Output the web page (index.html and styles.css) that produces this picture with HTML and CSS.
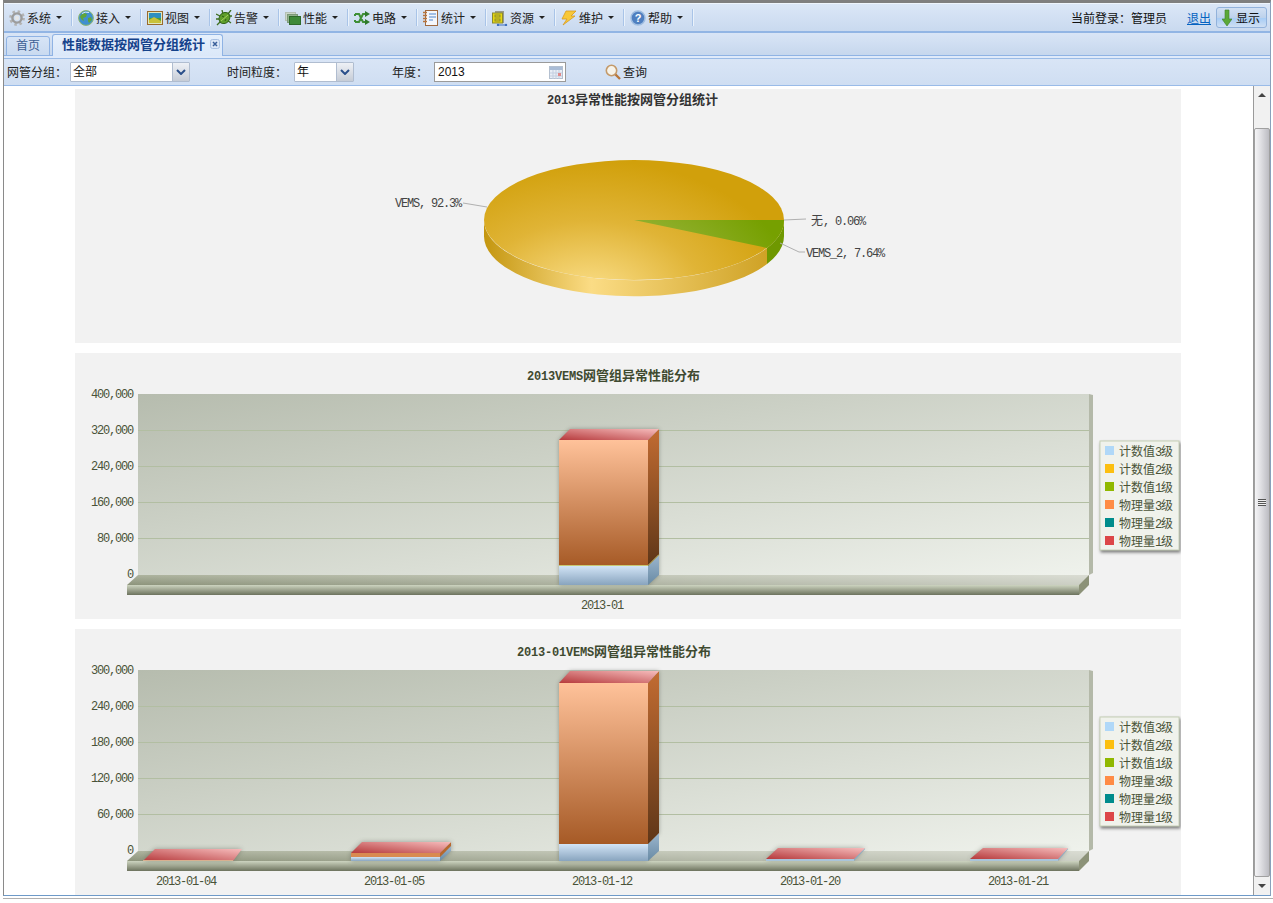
FILE: index.html
```html
<!DOCTYPE html>
<html lang="zh">
<head>
<meta charset="utf-8">
<title>性能数据按网管分组统计</title>
<link rel="stylesheet" href="styles.css">
</head>
<body>
<div class="frame">
  <div class="toolbar">
    <div class="items">
      <div class="item"><svg class="ico" viewBox="0 0 16 16"><circle cx="8" cy="8" r="6.400" fill="none" stroke="#b4b4b4" stroke-width="3" stroke-dasharray="2.400 2.600"/><circle cx="8" cy="8" r="4.600" fill="none" stroke="#9c9c9c" stroke-width="2.400"/><circle cx="8" cy="8" r="2.200" fill="#e6e6e6"/></svg><span>系统</span><i class="caret"></i></div>
      <div class="item"><svg class="ico" viewBox="0 0 16 16"><circle cx="8" cy="8" r="7.400" fill="#3f8fd0" stroke="#8fb86a"/><path d="M3 5l3-2 3 1-1 3-3 1 1 3-2-1-2-3zM10 8l3-1 1 3-3 3-1-2z" fill="#5fa53a"/><path d="M4 3.500a6 4 0 0 1 7-1" stroke="#d8ecfa" fill="none"/></svg><span>接入</span><i class="caret"></i></div>
      <div class="item"><svg class="ico" viewBox="0 0 16 16"><rect x=".5" y="1.500" width="15" height="13" fill="#dfe8c0" stroke="#9a6a2c"/><rect x="2" y="3" width="12" height="5" fill="#2f8fc0"/><rect x="2" y="8" width="12" height="5" fill="#4f9e3a"/><path d="M2 10l5-3 7 4v2H2z" fill="#c9c23a"/></svg><span>视图</span><i class="caret"></i></div>
      <div class="item"><svg class="ico" viewBox="0 0 16 16"><path d="M0 4l4 2M0 9h3M1 15l4-4M15 0l-3 4M16 6h-3M15 13l-4-3M6 0l1 4" stroke="#3f6f1f" stroke-width="1.300"/><ellipse cx="8.500" cy="8" rx="5" ry="6" transform="rotate(40 8.500 8)" fill="#5f9e2a" stroke="#33641a"/><path d="M5 11l7-6" stroke="#a8d060"/><path d="M6 6l2 1M9 11l1-2" stroke="#2d5a14"/></svg><span>告警</span><i class="caret"></i></div>
      <div class="item"><svg class="ico" viewBox="0 0 16 16"><rect x=".5" y="2.500" width="10" height="8" fill="#ccd6c8" stroke="#b4c0b4"/><rect x="2.500" y="4.500" width="10" height="8" fill="#93b28e" stroke="#7d9a7a"/><rect x="4.500" y="6.500" width="11" height="8" fill="#3f8a3a" stroke="#2f6a2c"/></svg><span>性能</span><i class="caret"></i></div>
      <div class="item"><svg class="ico" viewBox="0 0 16 16"><path d="M1 4h4l4 8h3M1 12h4l4-8h3M1 4v2M1 12v-2" fill="none" stroke="#3f8f36" stroke-width="2"/><path d="M11 1l5 3-5 3zM11 9l5 3-5 3z" fill="#2f7a2c"/></svg><span>电路</span><i class="caret"></i></div>
      <div class="item"><svg class="ico" viewBox="0 0 16 16"><rect x="2.500" y=".5" width="12" height="15" fill="#f4f6fb" stroke="#a06a40"/><path d="M0 2.500h4M0 5.500h4M0 8.500h4M0 11.500h4" stroke="#b8743c" stroke-width="1.500"/><path d="M6 4h7M6 7h7M6 10h4" stroke="#4f86d0" stroke-width="1.200"/></svg><span>统计</span><i class="caret"></i></div>
      <div class="item"><svg class="ico" viewBox="0 0 16 16"><rect x="3" y="1" width="9" height="12" fill="#9a9a8a"/><rect x=".5" y="3" width="10" height="10" fill="#e8d810" stroke="#8a8a30"/><rect x="3" y="5" width="5" height="2" fill="none" stroke="#8a8a30"/><rect x="3" y="9" width="5" height="2" fill="none" stroke="#8a8a30"/><path d="M5 15h10" stroke="#3f70c0"/><circle cx="6" cy="15" r="1.200" fill="#3f70c0"/><circle cx="14" cy="15" r="1.200" fill="#3f70c0"/></svg><span>资源</span><i class="caret"></i></div>
      <div class="item"><svg class="ico" viewBox="0 0 16 16"><path d="M5 1h10L10 6h4L2 15l4-6H1z" fill="#f8c838" stroke="#d89a20" stroke-width=".8"/></svg><span>维护</span><i class="caret"></i></div>
      <div class="item"><svg class="ico" viewBox="0 0 16 16"><circle cx="8" cy="8" r="7" fill="#4f7fc0" stroke="#9fbde0" stroke-width="1.500"/><text class="ico-q" x="8" y="12">?</text></svg><span>帮助</span><i class="caret"></i></div>
    </div>
    <div class="user">
      <span class="login">当前登录：管理员</span>
      <a class="logout" href="#">退出</a>
      <div class="show"><svg class="show-ico" viewBox="0 0 10 18"><path d="M3 1h4v9h3l-5 7-5-7h3z" fill="#5aa838" stroke="#3f7f28" stroke-width=".6"/></svg><span>显示</span></div>
    </div>
  </div>

  <div class="tabbar">
    <div class="tab">首页</div>
    <div class="tab tab-on">性能数据按网管分组统计<svg class="tab-x" viewBox="0 0 10 10"><rect x=".5" y=".5" width="9" height="9" rx="2" fill="#dbe6f6" stroke="#a9c1e3"/><path d="M3 3l4 4M7 3l-4 4" stroke="#3a5f9a" stroke-width="1.500"/></svg></div>
  </div>
  <div class="strip"></div>

  <div class="filter">
    <span class="lab lab-a">网管分组：</span>
    <div class="combo combo-a"><span class="val">全部</span><b class="drop"><svg viewBox="0 0 10 6"><path d="M1 1l4 4 4-4" fill="none" stroke="#2a4f8a" stroke-width="2"/></svg></b></div>
    <span class="lab lab-b">时间粒度：</span>
    <div class="combo combo-b"><span class="val">年</span><b class="drop"><svg viewBox="0 0 10 6"><path d="M1 1l4 4 4-4" fill="none" stroke="#2a4f8a" stroke-width="2"/></svg></b></div>
    <span class="lab lab-c">年度：</span>
    <div class="date"><span>2013</span><svg class="cal" viewBox="0 0 14 13"><rect x=".5" y=".5" width="13" height="12" fill="#e8eef6" stroke="#b4c0d0"/><rect x="1" y="1" width="12" height="3" fill="#a9bcd6"/><path d="M1 7h12M1 10h12M4 4v9M7 4v9M10 4v9" stroke="#c4cfe0"/><rect x="9" y="7" width="3" height="3" fill="#e08a8a"/></svg></div>
    <div class="query"><svg class="ico" viewBox="0 0 16 16"><circle cx="6.500" cy="6.500" r="5.200" fill="#f6f3ea" stroke="#c49a6a" stroke-width="1.600"/><path d="M10.500 10.500l4.500 4.500" stroke="#b8763a" stroke-width="2.400"/></svg><span>查询</span></div>
  </div>

  <div class="content">
    <div class="main">
      <div class="panel panel-a">
        <svg class="chart" width="1106" height="254" viewBox="75 89 1106 254">
          <defs>
            <radialGradient id="pieTop" gradientUnits="userSpaceOnUse" cx="0" cy="0" r="1" gradientTransform="translate(590 295) scale(205 135)"><stop offset="0" stop-color="#fce08c"/><stop offset=".55" stop-color="#e0b436"/><stop offset="1" stop-color="#d1a00b"/></radialGradient>
            <radialGradient id="pieGreen" gradientUnits="userSpaceOnUse" cx="0" cy="0" r="1" gradientTransform="translate(590 295) scale(205 135)"><stop offset=".55" stop-color="#92b030"/><stop offset="1" stop-color="#76a000"/></radialGradient>
            <linearGradient id="pieSide" gradientUnits="userSpaceOnUse" x1="484" y1="0" x2="767" y2="0"><stop offset="0" stop-color="#c4960f"/><stop offset=".38" stop-color="#fbdc85"/><stop offset="1" stop-color="#cfa225"/></linearGradient>
            <linearGradient id="wall" x1="0" y1="0" x2="1" y2="1"><stop offset="0" stop-color="#b6bcae"/><stop offset="1" stop-color="#eff2ec"/></linearGradient>
            <linearGradient id="floorTop" x1="0" y1="0" x2="0" y2="1"><stop offset="0" stop-color="#adb39e"/><stop offset="1" stop-color="#8d947c"/></linearGradient>
            <linearGradient id="floorFade" x1="0" y1="0" x2="1" y2="0"><stop offset="0" stop-color="#fff" stop-opacity="0"/><stop offset="1" stop-color="#fff" stop-opacity=".55"/></linearGradient>
            <linearGradient id="floorFront" x1="0" y1="0" x2="0" y2="1"><stop offset="0" stop-color="#cdd4c0"/><stop offset="1" stop-color="#6d735e"/></linearGradient>
            <linearGradient id="orFront" x1="0" y1="0" x2="0" y2="1"><stop offset="0" stop-color="#ffc29a"/><stop offset="1" stop-color="#a65a26"/></linearGradient>
            <linearGradient id="orSide" x1="0" y1="0" x2="0" y2="1"><stop offset="0" stop-color="#c26c32"/><stop offset="1" stop-color="#5e3618"/></linearGradient>
            <linearGradient id="blFront" x1="0" y1="0" x2="0" y2="1"><stop offset="0" stop-color="#d2e4f6"/><stop offset="1" stop-color="#88a4be"/></linearGradient>
            <linearGradient id="blSide" x1="0" y1="0" x2="0" y2="1"><stop offset="0" stop-color="#9cb6ce"/><stop offset="1" stop-color="#688aa4"/></linearGradient>
            <linearGradient id="redTop" x1="0" y1="1" x2="1" y2="0"><stop offset="0" stop-color="#b63a3c"/><stop offset="1" stop-color="#f6bcbc"/></linearGradient>
            <filter id="soft" x="-20%" y="-40%" width="140%" height="180%"><feGaussianBlur stdDeviation="2.500"/></filter>
            <filter id="softBig" x="-20%" y="-20%" width="140%" height="140%"><feGaussianBlur stdDeviation="2"/></filter>
          </defs>
          <text class="t-title t-plain" x="547" y="104"><tspan class="num-b">2013</tspan>异常性能按网管分组统计</text>
          <path d="M484 220v16a150 60 0 0 0 283 28v-16a150 60 0 0 1-283-28z" fill="url(#pieSide)"/>
          <path d="M767 248v16a150 60 0 0 0 17-28v-16a150 60 0 0 1-17 28z" fill="#6f9800"/>
          <ellipse cx="634" cy="220" rx="150" ry="60" fill="url(#pieTop)"/>
          <path d="M634 220h150a150 60 0 0 1-17 28z" fill="url(#pieGreen)"/>
          <path class="lead" d="M463 203l24 4M784 220l22-1M780 243l19 9h6"/>
          <text class="t-pie" x="395" y="207">VEMS, 92.3%</text>
          <text class="t-pie-cjk" x="811" y="225">无<tspan class="t-pie">, 0.06%</tspan></text>
          <text class="t-pie" x="806" y="257">VEMS_2, 7.64%</text>
        </svg>
      </div>

      <div class="panel panel-b">
        <svg class="chart" width="1106" height="266" viewBox="75 353 1106 266">
          <text class="t-title" x="527" y="380"><tspan class="num-b">2013VEMS</tspan>网管组异常性能分布</text>
          <path d="M1089 394l4 1v178l-4 2z" fill="#b4b9a9"/>
          <rect x="138" y="394" width="951" height="181" fill="url(#wall)"/>
          <path class="grid" d="M138 430.500h951M138 466.500h951M138 502.500h951M138 538.500h951"/>
          <path d="M138 575h951l-10 10H127z" fill="url(#floorTop)"/>
          <path d="M138 575h951l-10 10H127z" fill="url(#floorFade)"/>
          <rect x="127" y="585" width="952" height="10" fill="url(#floorFront)"/>
          <path d="M1079 585l10-10v10l-10 10z" fill="#8c9278"/>
          <text class="t-axis" x="133" y="398">400,000</text>
          <text class="t-axis" x="133" y="434">320,000</text>
          <text class="t-axis" x="133" y="470">240,000</text>
          <text class="t-axis" x="133" y="506">160,000</text>
          <text class="t-axis" x="133" y="542">80,000</text>
          <text class="t-axis" x="133" y="578">0</text>
          <path d="M559 440l11-11h89v146l-11 10H559z" fill="#4a4f45" opacity=".45" filter="url(#softBig)"/>
          <rect x="559" y="566" width="89" height="19" fill="url(#blFront)"/>
          <path d="M648 566l11-11v20l-11 10z" fill="url(#blSide)"/>
          <rect x="559" y="440" width="89" height="126" fill="url(#orFront)"/>
          <path d="M648 440l11-11v126l-11 11z" fill="url(#orSide)"/>
          <path class="edge" d="M559 565.500h89l11-11"/>
          <path d="M559 440l11-11h89l-11 11z" fill="url(#redTop)"/>
          <text class="t-x" x="602" y="609">2013-01</text>
          <g class="legend">
            <rect class="lg-box" x="1100" y="441" width="79" height="109"/>
            <rect x="1105" y="446" width="9" height="9" fill="#b0d8f8"/><text class="t-leg" x="1119" y="456">计数值<tspan class="num">3</tspan>级</text>
            <rect x="1105" y="464" width="9" height="9" fill="#fcbf10"/><text class="t-leg" x="1119" y="474">计数值<tspan class="num">2</tspan>级</text>
            <rect x="1105" y="482" width="9" height="9" fill="#90b800"/><text class="t-leg" x="1119" y="492">计数值<tspan class="num">1</tspan>级</text>
            <rect x="1105" y="500" width="9" height="9" fill="#ff8c45"/><text class="t-leg" x="1119" y="510">物理量<tspan class="num">3</tspan>级</text>
            <rect x="1105" y="518" width="9" height="9" fill="#008c8c"/><text class="t-leg" x="1119" y="528">物理量<tspan class="num">2</tspan>级</text>
            <rect x="1105" y="536" width="9" height="9" fill="#dc4648"/><text class="t-leg" x="1119" y="546">物理量<tspan class="num">1</tspan>级</text>
          </g>
        </svg>
      </div>

      <div class="panel panel-c">
        <svg class="chart" width="1106" height="266" viewBox="75 629 1106 266">
          <text class="t-title" x="517" y="656"><tspan class="num-b">2013-01VEMS</tspan>网管组异常性能分布</text>
          <path d="M1089 670l4 1v178l-4 2z" fill="#b4b9a9"/>
          <rect x="138" y="670" width="951" height="181" fill="url(#wall)"/>
          <path class="grid" d="M138 706.500h951M138 742.500h951M138 778.500h951M138 814.500h951"/>
          <path d="M138 851h951l-10 10H127z" fill="url(#floorTop)"/>
          <path d="M138 851h951l-10 10H127z" fill="url(#floorFade)"/>
          <rect x="127" y="861" width="952" height="10" fill="url(#floorFront)"/>
          <path d="M1079 861l10-10v10l-10 10z" fill="#8c9278"/>
          <text class="t-axis" x="133" y="674">300,000</text>
          <text class="t-axis" x="133" y="710">240,000</text>
          <text class="t-axis" x="133" y="746">180,000</text>
          <text class="t-axis" x="133" y="782">120,000</text>
          <text class="t-axis" x="133" y="818">60,000</text>
          <text class="t-axis" x="133" y="854">0</text>

          <path d="M143 861l12-12h87l-9 12z" fill="#4a4f45" opacity=".45" filter="url(#soft)"/>
          <path d="M143 861l12-12h87l-9 12z" fill="url(#redTop)"/>
          <path class="edge-o" d="M143 860.500h90"/>

          <path d="M351 853l11-11h89v9l-11 10h-89z" fill="#4a4f45" opacity=".45" filter="url(#soft)"/>
          <rect x="351" y="857" width="89" height="4" fill="url(#blFront)"/>
          <path d="M440 857l11-11v5l-11 10z" fill="url(#blSide)"/>
          <rect x="351" y="853" width="89" height="4" fill="#d98a50"/>
          <path d="M440 853l11-11v4l-11 11z" fill="#b8682e"/>
          <path d="M351 853l11-11h89l-11 11z" fill="url(#redTop)"/>

          <path d="M766 860l12-12h87l-11 12z" fill="#4a4f45" opacity=".45" filter="url(#soft)"/>
          <rect x="766" y="859" width="88" height="2" fill="#a9c4da"/>
          <path d="M854 861l11-12v-1l-11 11z" fill="#8aaac4"/>
          <path d="M766 859l12-11h87l-11 11z" fill="url(#redTop)"/>

          <path d="M970 860l13-12h85l-10 12z" fill="#4a4f45" opacity=".45" filter="url(#soft)"/>
          <rect x="970" y="859" width="88" height="2" fill="#a9c4da"/>
          <path d="M1058 861l10-12v-1l-10 11z" fill="#8aaac4"/>
          <path d="M970 859l13-11h85l-10 11z" fill="url(#redTop)"/>

          <path d="M559 683l11-12h89v162l-11 11v17h-89z" fill="#4a4f45" opacity=".45" filter="url(#softBig)"/>
          <rect x="559" y="844" width="89" height="17" fill="url(#blFront)"/>
          <path d="M648 844l11-11v18l-11 10z" fill="url(#blSide)"/>
          <rect x="559" y="683" width="89" height="161" fill="url(#orFront)"/>
          <path d="M648 683l11-12v162l-11 11z" fill="url(#orSide)"/>
          <path d="M559 683l11-12h89l-11 12z" fill="url(#redTop)"/>

          <text class="t-x" x="186" y="885">2013-01-04</text>
          <text class="t-x" x="394" y="885">2013-01-05</text>
          <text class="t-x" x="602" y="885">2013-01-12</text>
          <text class="t-x" x="810" y="885">2013-01-20</text>
          <text class="t-x" x="1018" y="885">2013-01-21</text>
          <g class="legend">
            <rect class="lg-box" x="1100" y="717" width="79" height="109"/>
            <rect x="1105" y="722" width="9" height="9" fill="#b0d8f8"/><text class="t-leg" x="1119" y="732">计数值<tspan class="num">3</tspan>级</text>
            <rect x="1105" y="740" width="9" height="9" fill="#fcbf10"/><text class="t-leg" x="1119" y="750">计数值<tspan class="num">2</tspan>级</text>
            <rect x="1105" y="758" width="9" height="9" fill="#90b800"/><text class="t-leg" x="1119" y="768">计数值<tspan class="num">1</tspan>级</text>
            <rect x="1105" y="776" width="9" height="9" fill="#ff8c45"/><text class="t-leg" x="1119" y="786">物理量<tspan class="num">3</tspan>级</text>
            <rect x="1105" y="794" width="9" height="9" fill="#008c8c"/><text class="t-leg" x="1119" y="804">物理量<tspan class="num">2</tspan>级</text>
            <rect x="1105" y="812" width="9" height="9" fill="#dc4648"/><text class="t-leg" x="1119" y="822">物理量<tspan class="num">1</tspan>级</text>
          </g>
        </svg>
      </div>
    </div>
    <div class="scroll">
      <div class="sb-btn"><i class="tri-up"></i></div>
      <div class="sb-thumb"><i class="grip"></i></div>
      <div class="sb-btn"><i class="tri-down"></i></div>
    </div>
  </div>
</div>
<div class="foot"></div>
</body>
</html>
```

FILE: styles.css
```css
* { box-sizing: border-box; }
html, body { margin: 0; padding: 0; background: #fff; overflow: hidden; }
body {
  height: 903px;
  padding-left: 3px;
  font-family: "Noto Sans CJK SC", "Liberation Sans", sans-serif;
  font-size: 12px;
  color: #1a1a1a;
}
.frame {
  width: 1268px;
  height: 896px;
  display: flex;
  flex-direction: column;
  border-top: 3px solid #7f7f7f;
  border-left: 1px solid #8a8a8a;
  border-right: 1px solid #8aa0bb;
  border-bottom: 1px solid #6e9ac8;
}

/* top toolbar */
.toolbar {
  height: 30px;
  flex: none;
  display: flex;
  align-items: center;
  justify-content: space-between;
  border-top: 1px solid #eef5fd;
  border-bottom: 2px solid #92b5e4;
  background: linear-gradient(#dbe7f7, #c9d9ef);
}
.items { display: flex; align-items: center; margin-left: -1px; }
.item {
  width: 69px;
  height: 17px;
  padding-left: 6px;
  display: flex;
  align-items: center;
  border-right: 1px solid #a9c4e8;
  box-shadow: 1px 0 0 #eaf2fb;
  color: #222;
  line-height: 17px;
}
.ico { width: 16px; height: 16px; flex: none; margin-right: 2px; }
.ico-q { font: bold 11px "Liberation Sans", sans-serif; fill: #fff; text-anchor: middle; }
.caret {
  margin-left: 5px;
  width: 0;
  height: 0;
  border: 3px solid transparent;
  border-top: 3px solid #222;
  border-bottom: 0;
}
.user { display: flex; align-items: center; padding-right: 3px; }
.login { margin-right: 20px; color: #111; }
.logout { margin-right: 5px; color: #0563c1; text-decoration: underline; }
.show {
  width: 51px;
  height: 21px;
  padding-left: 5px;
  display: flex;
  align-items: center;
  border: 1px solid #92b2db;
  border-radius: 3px;
  background: linear-gradient(#d2e0f3 0, #bdd2ec 50%, #a8cdf5 55%, #cfdff3 100%);
  color: #111;
}
.show-ico { width: 10px; height: 18px; margin-right: 4px; }

/* tabs */
.tabbar {
  height: 23px;
  flex: none;
  display: flex;
  align-items: flex-end;
  padding-left: 2px;
  gap: 2px;
  border-bottom: 1px solid #8fb3e4;
  background: linear-gradient(#d9e5f6, #c6d7ed);
}
.tab {
  width: 44px;
  height: 20px;
  margin-bottom: -1px;
  text-align: center;
  line-height: 15px;
  color: #3d5f94;
  background: linear-gradient(#d7e4f6, #c9daf0);
  border: 1px solid #8fb3e4;
  border-radius: 3px 3px 0 0;
}
.tab-on {
  width: 171px;
  height: 22px;
  padding: 0 0 4px 9px;
  display: flex;
  align-items: center;
  font-size: 13px;
  font-weight: bold;
  line-height: 17px;
  color: #15428b;
  background: linear-gradient(#e6f0fc, #dbe8f9);
  border-bottom: 0;
}
.tab-x { width: 10px; height: 10px; margin-left: 5px; }
.strip { height: 3px; flex: none; background: #dfeafa; border-bottom: 1px solid #9abbe6; }

/* filter row */
.filter {
  height: 27px;
  flex: none;
  display: flex;
  align-items: center;
  border-bottom: 1px solid #99bbe8;
  background: linear-gradient(#d9e5f6, #cfdef2);
  color: #222;
}
.lab { flex: none; padding-bottom: 2px; }
.lab-a { width: 63px; margin-left: 3px; }
.lab-b { width: 67px; margin-left: 37px; }
.lab-c { width: 42px; margin-left: 38px; }
.combo {
  height: 20px;
  flex: none;
  display: flex;
  justify-content: space-between;
  background: #fff;
  border: 1px solid #b0bdd0;
  border-radius: 1px;
  line-height: 16px;
  padding-left: 2px;
  color: #111;
}
.combo-a { width: 120px; }
.combo-b { width: 60px; }
.drop {
  width: 17px;
  display: flex;
  align-items: center;
  justify-content: center;
  background: linear-gradient(#eef1f6, #c6ccd6);
  border-left: 1px solid #b0bdd0;
}
.drop svg { width: 10px; height: 6px; }
.date {
  width: 132px;
  height: 20px;
  flex: none;
  display: flex;
  align-items: center;
  justify-content: space-between;
  padding: 0 2px 0 3px;
  background: #fff;
  border: 1px solid #9a9a9a;
  font-family: "Liberation Sans", sans-serif;
  color: #111;
}
.cal { width: 14px; height: 13px; }
.query { margin-left: 39px; padding-bottom: 1px; display: flex; align-items: center; color: #222; }

/* content */
.content { height: 809px; flex: none; display: flex; background: #fff; }
.main {
  flex: 1;
  overflow: hidden;
  padding: 3px 0 0 71px;
  display: flex;
  flex-direction: column;
  gap: 10px;
}
.panel { width: 1106px; flex: none; background: #f2f2f2; }
.panel-a { height: 254px; }
.panel-b, .panel-c { height: 266px; }
.chart { display: block; }

/* chart text */
.t-title { font: bold 13px "Noto Sans CJK SC", sans-serif; fill: #3f4a30; }
.t-plain { fill: #333; }
.num-b { font: bold 12px "Liberation Mono", monospace; letter-spacing: -.2px; }
.t-axis { font: 12px "Liberation Mono", monospace; letter-spacing: -1.2px; fill: #4a5238; text-anchor: end; }
.t-x { font: 12px "Liberation Mono", monospace; letter-spacing: -1.2px; fill: #4a5238; text-anchor: middle; }
.t-pie { font: 12px "Liberation Mono", monospace; letter-spacing: -1.2px; fill: #444; }
.t-pie-cjk { font: 12px "Noto Sans CJK SC", sans-serif; fill: #444; }
.t-leg { font: 12px "Noto Sans CJK SC", sans-serif; fill: #4a5238; }
.num { font: 12px "Liberation Mono", monospace; letter-spacing: -1.2px; }
.grid { stroke: #b2bea2; stroke-width: 1; fill: none; }
.lead { stroke: #b0b0b0; stroke-width: 1; fill: none; }
.edge { stroke: #c9c870; stroke-width: 1; fill: none; }
.edge-o { stroke: #d8b090; stroke-width: 1; fill: none; }
.lg-box {
  fill: #f0f2ec;
  stroke: #c6cfb6;
  stroke-width: 1;
  filter: drop-shadow(1px 2px 1.5px #7a7a7a);
}

/* scrollbar */
.scroll {
  width: 17px;
  flex: none;
  display: flex;
  flex-direction: column;
  background: #f1f1f1;
  border-left: 1px solid #9a9a9a;
}
.sb-btn { height: 18px; flex: none; display: flex; align-items: center; justify-content: center; }
.scroll .sb-btn:first-child { height: 42px; padding-bottom: 24px; }
.tri-up { border: 4px solid transparent; border-bottom: 4px solid #444; border-top: 0; }
.tri-down { border: 4px solid transparent; border-top: 4px solid #444; border-bottom: 0; }
.sb-thumb {
  flex: 1;
  display: flex;
  align-items: center;
  justify-content: center;
  border: 1px solid #a0a0a0;
  border-radius: 2px;
  background: linear-gradient(90deg, #f4f4f6, #e0e0e4 40%, #bcbcc2);
}
.grip {
  width: 8px;
  height: 7px;
  background: repeating-linear-gradient(#555 0 1px, #eee 1px 2px);
}
.foot { margin: 2px 0 0 0; height: 1px; background: #b0b0b0; }
```
